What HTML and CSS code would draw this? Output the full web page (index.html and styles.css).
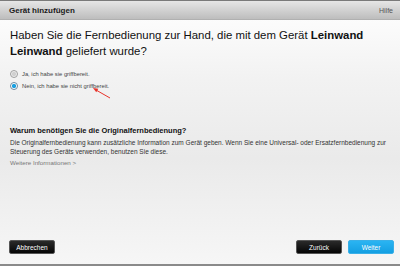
FILE: index.html
```html
<!DOCTYPE html>
<html lang="de">
<head>
  <meta charset="UTF-8">
  <title>Gerät hinzufügen</title>
  <link rel="stylesheet" href="styles.css">
</head>
<body>
  <div class="dialog">
    <div class="titlebar">
      <span class="title">Gerät hinzufügen</span>
      <span class="help">Hilfe</span>
    </div>
    <div class="content">
      <h1 class="question">Haben Sie die Fernbedienung zur Hand, die mit dem Gerät <b>Leinwand</b><br><b>Leinwand</b> geliefert wurde?</h1>
      <div class="options">
        <label class="option"><span class="radio"></span>Ja, ich habe sie griffbereit.</label>
        <label class="option"><span class="radio checked"></span>Nein, ich habe sie nicht griffbereit.</label>
        <svg class="arrow" width="24" height="16" viewBox="0 0 24 16">
          <line x1="20" y1="12" x2="6" y2="4" stroke="#e8332a" stroke-width="1"/>
          <polygon points="3,2 8.3,2.8 6.3,6.2" fill="#e8332a"/>
        </svg>
      </div>
      <div class="info">
        <h2>Warum benötigen Sie die Originalfernbedienung?</h2>
        <p>Die Originalfernbedienung kann zusätzliche Information zum Gerät geben. Wenn Sie eine Universal- oder Ersatzfernbedienung zur Steuerung des Geräts verwenden, benutzen Sie diese.</p>
        <a class="more">Weitere Informationen &gt;</a>
      </div>
    </div>
    <div class="footer">
      <button class="btn">Abbrechen</button>
      <div class="nav">
        <button class="btn">Zurück</button>
        <button class="btn primary">Weiter</button>
      </div>
    </div>
  </div>
</body>
</html>
```

FILE: styles.css
```css
body {
  margin: 0;
  font-family: "Liberation Sans", Arial, sans-serif;
  color: #222222;
}

.dialog {
  width: 400px;
  height: 266px;
  display: flex;
  flex-direction: column;
  background: linear-gradient(#ffffff 0%, #f2f2f2 30%, #eaeaea 60%, #f6f6f6 100%);
  border-bottom: 2px solid #8a8a8a;
  box-sizing: border-box;
}

.titlebar {
  height: 20px;
  display: flex;
  align-items: center;
  justify-content: space-between;
  padding: 0 7px 0 9px;
  background: linear-gradient(#e6e6e6, #bdbdbd);
  border-top: 1px solid #7a7a7a;
  border-bottom: 1px solid #b0b0b0;
  box-sizing: border-box;
}

.title {
  font-size: 8px;
  font-weight: bold;
  color: #1a1a1a;
}

.help {
  font-size: 7px;
  color: #555555;
}

.content {
  flex: 1;
  padding: 7px 6px 0 10px;
}

.question {
  margin: 0;
  font-size: 11.4px;
  font-weight: normal;
  line-height: 16px;
  white-space: nowrap;
  color: #111111;
}

.options {
  position: relative;
  margin-top: 11px;
  display: flex;
  flex-direction: column;
  gap: 4px;
}

.option {
  display: flex;
  align-items: center;
  gap: 4px;
  font-size: 5.8px;
  color: #444444;
  height: 8px;
}

.radio {
  width: 6px;
  height: 6px;
  border-radius: 50%;
  border: 1px solid #a0a0a0;
  background: radial-gradient(#d0d0d0 40%, #eeeeee 60%);
}

.radio.checked {
  border-color: #6a8aa0;
  background: radial-gradient(#1aa0e0 45%, #ffffff 55%);
}

.arrow {
  position: absolute;
  left: 80px;
  top: 16px;
}

.info {
  margin-top: 36px;
}

.info h2 {
  margin: 0 0 4px 0;
  font-size: 7.5px;
  color: #111111;
}

.info p {
  margin: 0;
  font-size: 6.5px;
  line-height: 8.5px;
  color: #333333;
}

.more {
  display: block;
  margin-top: 3px;
  font-size: 6.2px;
  color: #777777;
}

.footer {
  display: flex;
  justify-content: space-between;
  align-items: center;
  padding: 0 6px 10px 9px;
}

.nav {
  display: flex;
  gap: 6px;
}

.btn {
  width: 46px;
  height: 14px;
  padding: 0;
  font-family: "Liberation Sans", Arial, sans-serif;
  font-size: 6.5px;
  color: #ffffff;
  background: linear-gradient(#2a2a2a, #050505);
  border: 1px solid #555555;
  border-radius: 2px;
}

.btn.primary {
  background: linear-gradient(#2ab4f2, #149fe2);
  border-color: #3ab0e8;
}
```
